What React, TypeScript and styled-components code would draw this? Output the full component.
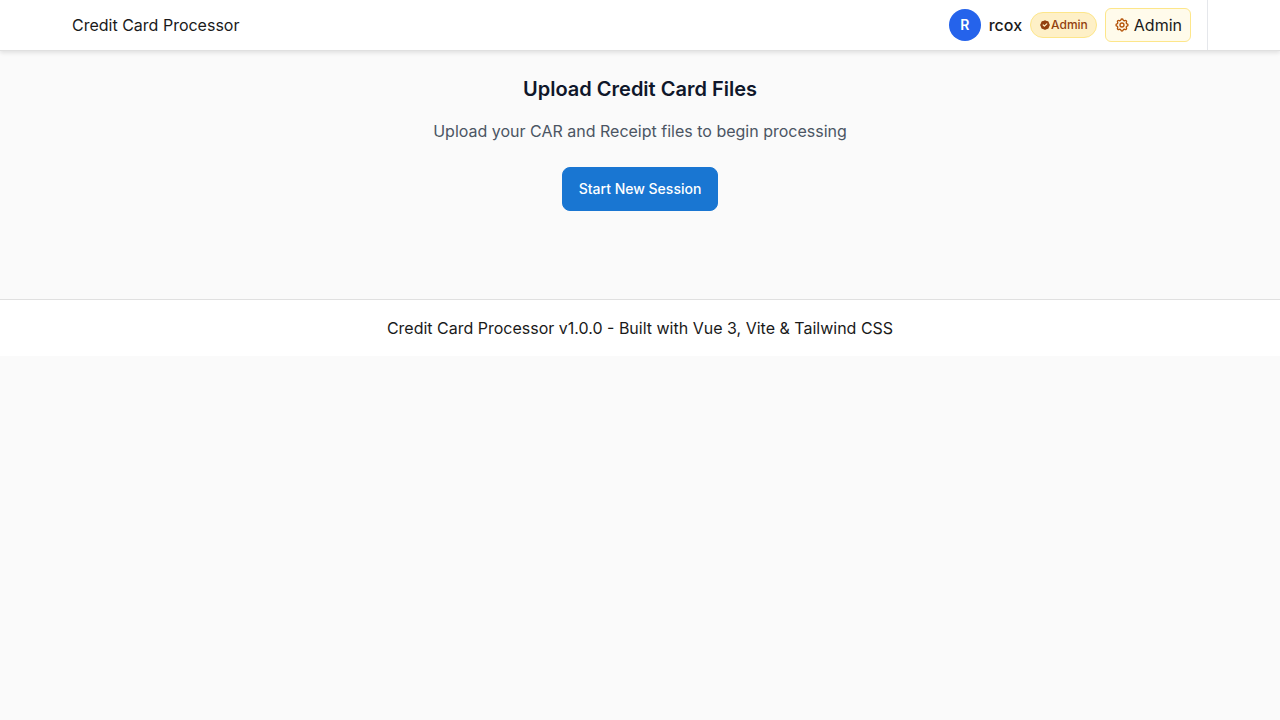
import React from 'react';
import styled, { createGlobalStyle } from 'styled-components';

const GlobalStyle = createGlobalStyle`
  *, *::before, *::after { box-sizing: border-box; }
  body {
    margin: 0;
    background: #fafafa;
    color: #1a1a1a;
    font-family: Inter, "Liberation Sans", sans-serif;
    font-size: 16px;
    line-height: 24px;
    -webkit-font-smoothing: antialiased;
  }
  h2, p { margin: 0; }
`;

const Header = styled.header`
  position: relative;
  padding: 0 72px;
  background: #ffffff;
  border-bottom: 1px solid #e0e0e0;
  box-shadow: 0 2px 4px rgba(0, 0, 0, 0.1);
`;

const HeaderInner = styled.div`
  display: flex;
  align-items: center;
  justify-content: space-between;
`;

const UserArea = styled.div`
  display: flex;
  align-items: center;
  gap: 8px;
  padding: 8px 16px 8px 0;
  border-right: 1px solid #e5e7eb;
`;

const Avatar = styled.span`
  display: flex;
  align-items: center;
  justify-content: center;
  width: 32px;
  height: 32px;
  border-radius: 50%;
  background: #2563eb;
  color: #ffffff;
  font-size: 14px;
  font-weight: 600;
  line-height: 20px;
`;

const UserName = styled.span`
  font-weight: 500;
`;

const RoleBadge = styled.span`
  display: flex;
  align-items: center;
  padding: 4px 8px;
  border: 1px solid #fde68a;
  border-radius: 999px;
  background: #fef0c7;
  color: #92400e;
  font-size: 12px;
  font-weight: 500;
  line-height: 16px;
`;

const AdminLink = styled.a`
  display: flex;
  align-items: center;
  gap: 4px;
  padding: 4px 8px;
  border: 1px solid #fde68a;
  border-radius: 6px;
  background: #fffbeb;
  color: #1a1a1a;
  text-decoration: none;
`;

const Icon = styled.svg<{ $size: number }>`
  flex: none;
  width: ${({ $size }) => $size}px;
  height: ${({ $size }) => $size}px;
`;

const Main = styled.main`
  display: flex;
  flex-direction: column;
  align-items: center;
  padding: 24px 24px 88px;
  text-align: center;
`;

const Title = styled.h2`
  color: #0f172a;
  font-size: 20px;
  font-weight: 600;
  line-height: 28px;
`;

const Subtitle = styled.p`
  && { margin: 16px 0 24px; }
  color: #4b5563;
`;

const PrimaryButton = styled.button`
  min-height: 44px;
  padding: 8px 16px;
  border: 1px solid #1976d2;
  border-radius: 8px;
  background: #1976d2;
  color: #ffffff;
  font-family: inherit;
  font-size: 14px;
  font-weight: 500;
  line-height: 20px;
  cursor: pointer;
`;

const Footer = styled.footer`
  padding: 16px;
  border-top: 1px solid #e0e0e0;
  background: #ffffff;
  text-align: center;
`;

const VerifiedIcon = () => (
  <Icon $size={12} viewBox="0 0 20 20" fill="currentColor" aria-hidden="true">
    <path
      fillRule="evenodd"
      clipRule="evenodd"
      d="M6.267 3.455a3.066 3.066 0 001.745-.723 3.066 3.066 0 013.976 0 3.066 3.066 0 001.745.723 3.066 3.066 0 012.812 2.812c.051.643.304 1.254.723 1.745a3.066 3.066 0 010 3.976 3.066 3.066 0 00-.723 1.745 3.066 3.066 0 01-2.812 2.812 3.066 3.066 0 00-1.745.723 3.066 3.066 0 01-3.976 0 3.066 3.066 0 00-1.745-.723 3.066 3.066 0 01-2.812-2.812 3.066 3.066 0 00-.723-1.745 3.066 3.066 0 010-3.976 3.066 3.066 0 00.723-1.745 3.066 3.066 0 012.812-2.812zm7.44 5.252a1 1 0 00-1.414-1.414L9 10.586 7.707 9.293a1 1 0 00-1.414 1.414l2 2a1 1 0 001.414 0l4-4z"
    />
  </Icon>
);

const CogIcon = () => (
  <Icon
    $size={16}
    viewBox="0 0 24 24"
    fill="none"
    stroke="#b45309"
    strokeWidth={2}
    strokeLinecap="round"
    strokeLinejoin="round"
    aria-hidden="true"
  >
    <path d="M10.325 4.317c.426-1.756 2.924-1.756 3.35 0a1.724 1.724 0 002.573 1.066c1.543-.94 3.31.826 2.37 2.37a1.724 1.724 0 001.065 2.572c1.756.426 1.756 2.924 0 3.35a1.724 1.724 0 00-1.066 2.573c.94 1.543-.826 3.31-2.37 2.37a1.724 1.724 0 00-2.572 1.065c-.426 1.756-2.924 1.756-3.35 0a1.724 1.724 0 00-2.573-1.066c-1.543.94-3.31-.826-2.37-2.37a1.724 1.724 0 00-1.065-2.572c-1.756-.426-1.756-2.924 0-3.35a1.724 1.724 0 001.066-2.573c-.94-1.543.826-3.31 2.37-2.37.996.608 2.296.07 2.572-1.065z" />
    <path d="M15 12a3 3 0 11-6 0 3 3 0 016 0z" />
  </Icon>
);

export default function App() {
  return (
    <>
      <GlobalStyle />
      <Header>
        <HeaderInner>
          <span>Credit Card Processor</span>
          <UserArea>
            <Avatar>R</Avatar>
            <UserName>rcox</UserName>
            <RoleBadge>
              <VerifiedIcon />
              Admin
            </RoleBadge>
            <AdminLink href="#admin">
              <CogIcon />
              Admin
            </AdminLink>
          </UserArea>
        </HeaderInner>
      </Header>
      <Main>
        <Title>Upload Credit Card Files</Title>
        <Subtitle>Upload your CAR and Receipt files to begin processing</Subtitle>
        <PrimaryButton type="button">Start New Session</PrimaryButton>
      </Main>
      <Footer>
        <p>Credit Card Processor v1.0.0 - Built with Vue 3, Vite &amp; Tailwind CSS</p>
      </Footer>
    </>
  );
}
